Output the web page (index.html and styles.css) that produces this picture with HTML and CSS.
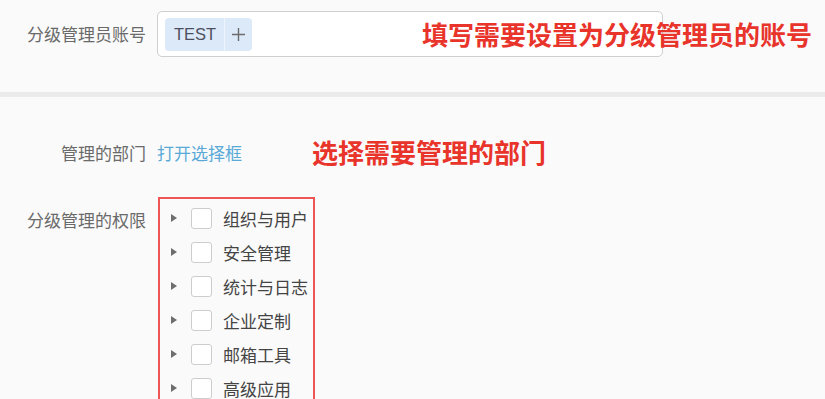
FILE: index.html
```html
<!DOCTYPE html>
<html lang="zh-CN">
<head>
  <meta charset="UTF-8" />
  <title>分级管理员设置</title>
  <link rel="stylesheet" href="styles.css">
</head>
<body>

  <div class="page">
    <!-- 账号 -->
    <section class="top-section">
      <div class="form-row account-row">
        <span class="form-label">分级管理员账号</span>
        <div class="account-input">
          <span class="tag">
            <span class="tag-text">TEST</span>
            <span class="tag-add">
              <svg width="15" height="15" viewBox="0 0 15 15"><path d="M7.5 1v13M1 7.5h13" stroke="#6b6b6b" stroke-width="1.4" fill="none"/></svg>
            </span>
          </span>
        </div>
        <span class="note note-account">填写需要设置为分级管理员的账号</span>
      </div>
    </section>

    <div class="divider"></div>

    <!-- 部门与权限 -->
    <section class="bottom-section">
      <div class="form-row dept-row">
        <span class="form-label">管理的部门</span>
        <a class="open-link" href="#">打开选择框</a>
        <span class="note note-dept">选择需要管理的部门</span>
      </div>

      <div class="form-row perm-row">
        <span class="form-label">分级管理的权限</span>
        <ul class="perm-tree">
          <li><span class="caret"></span><span class="check"></span><span>组织与用户</span></li>
          <li><span class="caret"></span><span class="check"></span><span>安全管理</span></li>
          <li><span class="caret"></span><span class="check"></span><span>统计与日志</span></li>
          <li><span class="caret"></span><span class="check"></span><span>企业定制</span></li>
          <li><span class="caret"></span><span class="check"></span><span>邮箱工具</span></li>
          <li><span class="caret"></span><span class="check"></span><span>高级应用</span></li>
        </ul>
      </div>
    </section>
  </div>

</body>
</html>
```

FILE: styles.css
```css
/* --- 页面 --- */
body {
  margin: 0;
  background-color: #fafafa;
  font-family: "Noto Sans CJK SC", "Noto Sans", sans-serif;
  color: #666;
  overflow: hidden;
}

.page {
  width: 825px;
  height: 399px;
  overflow: hidden;
}

/* --- 表单行 --- */
.form-row {
  display: flex;
  align-items: center;
  position: relative;
}

.form-label {
  width: 146px;
  flex-shrink: 0;
  text-align: right;
  font-size: 17px;
  line-height: 24px;
  color: #6a6a6a;
  margin-right: 11px;
}

/* --- 账号输入 --- */
.top-section {
  height: 92px;
  padding-top: 11px;
  box-sizing: border-box;
}

.account-input {
  width: 506px;
  height: 46px;
  box-sizing: border-box;
  border: 1px solid #cfcfcf;
  border-radius: 5px;
  background-color: #fff;
  padding: 6px 7px;
  display: flex;
  align-items: center;
}

.tag {
  display: flex;
  height: 33px;
  background-color: #dce9f9;
  border-radius: 4px;
  overflow: hidden;
}

.tag-text {
  font-family: "Liberation Sans", Arial, sans-serif;
  font-size: 16.5px;
  color: #4e4f5e;
  line-height: 33px;
  padding: 0 8px 0 9px;
  border-right: 1px solid #eef4fc;
}

.tag-add {
  width: 27px;
  display: flex;
  align-items: center;
  justify-content: center;
}

/* --- 红色标注 --- */
.note {
  position: absolute;
  font-size: 26px;
  font-weight: bold;
  color: #e8342a;
  line-height: 30px;
  white-space: nowrap;
}

.note-account {
  left: 422px;
  top: 8px;
}

.note-dept {
  left: 312px;
  top: -4px;
}

/* --- 分隔条 --- */
.divider {
  height: 5px;
  background-color: #ebebeb;
}

/* --- 部门 --- */
.bottom-section {
  padding-top: 44px;
}

.dept-row {
  height: 24px;
}

.open-link {
  font-size: 17px;
  line-height: 24px;
  color: #5aaad8;
  text-decoration: none;
}

/* --- 权限树 --- */
.perm-row {
  align-items: flex-start;
  margin-top: 32px;
}

.perm-row .form-label {
  margin-top: 11px;
  margin-right: 12px;
}

.perm-tree {
  list-style: none;
  margin: 0;
  padding: 2px 0 2px 11px;
  border: 2px solid #ee5555;
  width: 157px;
  box-sizing: border-box;
}

.perm-tree li {
  height: 34px;
  display: flex;
  align-items: center;
  font-size: 17px;
  color: #444;
  white-space: nowrap;
}

.caret {
  flex-shrink: 0;
  width: 0;
  height: 0;
  border-top: 4px solid transparent;
  border-bottom: 4px solid transparent;
  border-left: 6px solid #6e6e6e;
  margin-right: 14px;
}

.check {
  flex-shrink: 0;
  width: 21px;
  height: 21px;
  box-sizing: border-box;
  border: 1px solid #cdcdcd;
  border-radius: 3px;
  background-color: #fff;
  margin-right: 11px;
}
```
